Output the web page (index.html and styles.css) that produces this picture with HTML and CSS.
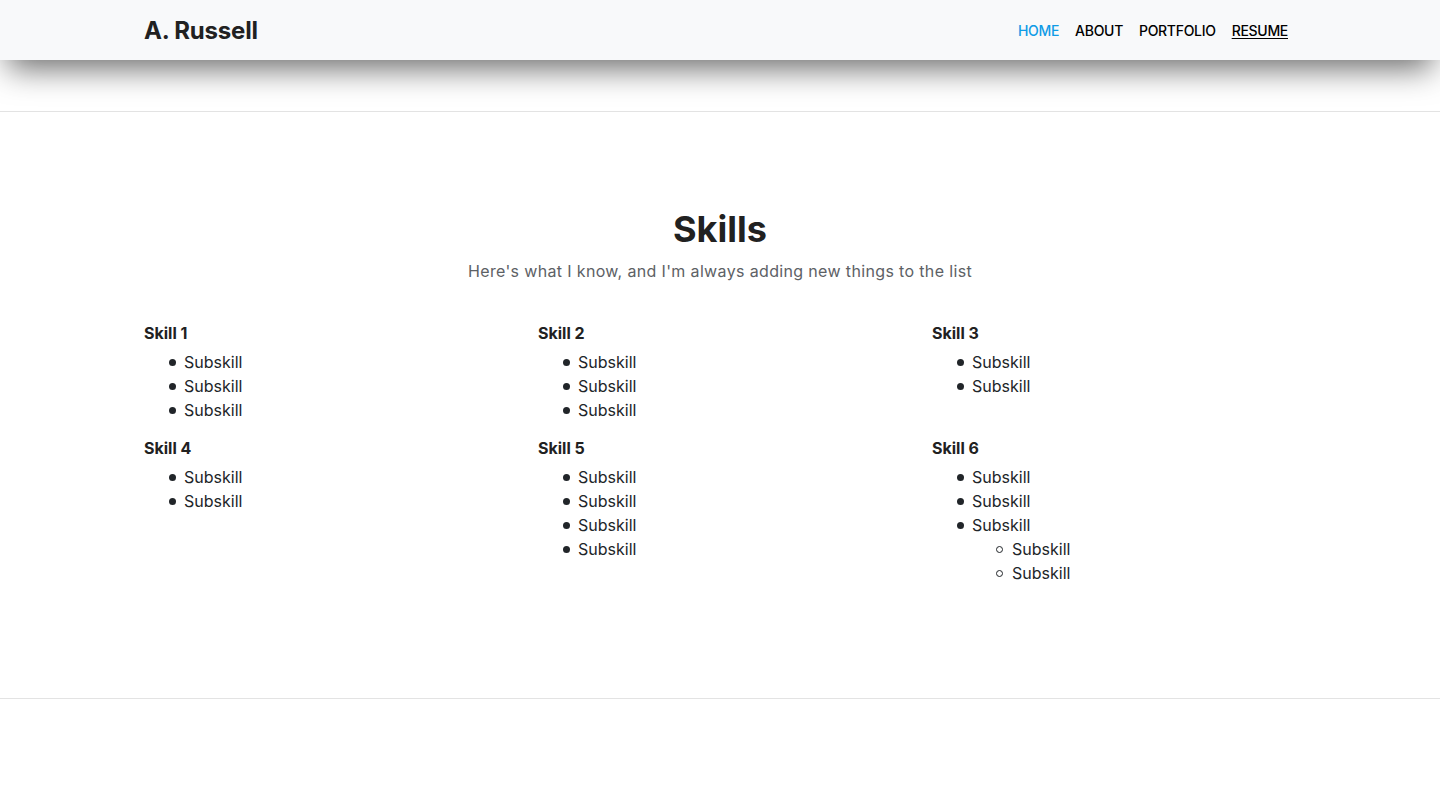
FILE: index.html
```html
<!DOCTYPE html>
<html lang="en">
<head>
<meta charset="utf-8">
<title>A. Russell</title>
<link rel="stylesheet" href="styles.css">
</head>
<body>
<header class="navbar">
  <div class="container nav-inner">
    <a class="brand" href="#">A. Russell</a>
    <nav class="nav">
      <a class="nav-link active" href="#">HOME</a>
      <a class="nav-link" href="#">ABOUT</a>
      <a class="nav-link" href="#">PORTFOLIO</a>
      <a class="nav-link underline" href="#">RESUME</a>
    </nav>
  </div>
</header>
<main class="main">
  <section class="skills">
    <div class="container">
      <h2 class="title">Skills</h2>
      <p class="subtitle">Here's what I know, and I'm always adding new things to the list</p>
      <div class="grid">
        <div class="skill">
          <h5 class="skill-name">Skill 1</h5>
          <ul class="list"><li>Subskill</li><li>Subskill</li><li>Subskill</li></ul>
        </div>
        <div class="skill">
          <h5 class="skill-name">Skill 2</h5>
          <ul class="list"><li>Subskill</li><li>Subskill</li><li>Subskill</li></ul>
        </div>
        <div class="skill">
          <h5 class="skill-name">Skill 3</h5>
          <ul class="list"><li>Subskill</li><li>Subskill</li></ul>
        </div>
        <div class="skill">
          <h5 class="skill-name">Skill 4</h5>
          <ul class="list"><li>Subskill</li><li>Subskill</li></ul>
        </div>
        <div class="skill">
          <h5 class="skill-name">Skill 5</h5>
          <ul class="list"><li>Subskill</li><li>Subskill</li><li>Subskill</li><li>Subskill</li></ul>
        </div>
        <div class="skill">
          <h5 class="skill-name">Skill 6</h5>
          <ul class="list"><li>Subskill</li><li>Subskill</li><li>Subskill
            <ul class="sublist"><li>Subskill</li><li>Subskill</li></ul></li></ul>
        </div>
      </div>
    </div>
  </section>
</main>
</body>
</html>
```

FILE: styles.css
```css
*, *::before, *::after { box-sizing: border-box; }
html, body { margin: 0; padding: 0; }
body {
  font-family: "Inter", "Noto Sans", sans-serif;
  font-size: 16px;
  line-height: 1.5;
  color: #212529;
  background: #fff;
}
.container {
  width: 1152px;
  margin: 0 auto;
}
.navbar {
  height: 60px;
  background: #f8f9fa;
  box-shadow: 0 16px 32px -8px rgba(0, 0, 0, 0.6);
  position: relative;
  z-index: 2;
}
.nav-inner {
  height: 60px;
  display: flex;
  align-items: center;
  justify-content: space-between;
}
.brand {
  font-size: 24px;
  font-weight: 700;
  color: #212121;
  text-decoration: none;
  letter-spacing: -0.2px;
  padding-top: 2px;
}
.nav {
  display: flex;
  align-items: center;
  padding-right: 8px;
}
.nav-link {
  font-size: 14px;
  font-weight: 500;
  color: #000;
  text-decoration: none;
  margin-left: 16px;
  letter-spacing: -0.3px;
}
.nav-link.active { color: #0f9be6; }
.nav-link.underline { text-decoration: underline; text-underline-offset: 2px; }
.main { padding-top: 51px; }
.skills {
  border-top: 1px solid #e3e3e3;
  border-bottom: 1px solid #e3e3e3;
  padding: 96px 0 97px;
}
.title {
  margin: 0 0 8px;
  text-align: center;
  font-size: 36px;
  line-height: 1.2;
  font-weight: 700;
  color: #212121;
}
.subtitle {
  margin: 0 0 40px;
  text-align: center;
  color: #5d6165;
  letter-spacing: 0.35px;
}
.grid {
  display: grid;
  grid-template-columns: repeat(3, 394px);
}
.skill-name {
  margin: 0 0 7px;
  font-size: 16px;
  line-height: 20px;
  font-weight: 700;
  color: #212121;
}
.list {
  margin: 0 0 16px;
  padding-left: 40px;
  list-style: none;
}
.list li { line-height: 24px; }
.list > li::before {
  content: "";
  display: inline-block;
  width: 7px;
  height: 7px;
  border-radius: 50%;
  background: #212529;
  margin-left: -15px;
  margin-right: 8px;
  vertical-align: 2px;
}
.sublist {
  margin: 0;
  padding-left: 40px;
  list-style: none;
}
.sublist > li::before {
  content: "";
  display: inline-block;
  width: 7px;
  height: 7px;
  border-radius: 50%;
  border: 1px solid #212529;
  margin-left: -16px;
  margin-right: 9px;
  vertical-align: 2px;
}
```
